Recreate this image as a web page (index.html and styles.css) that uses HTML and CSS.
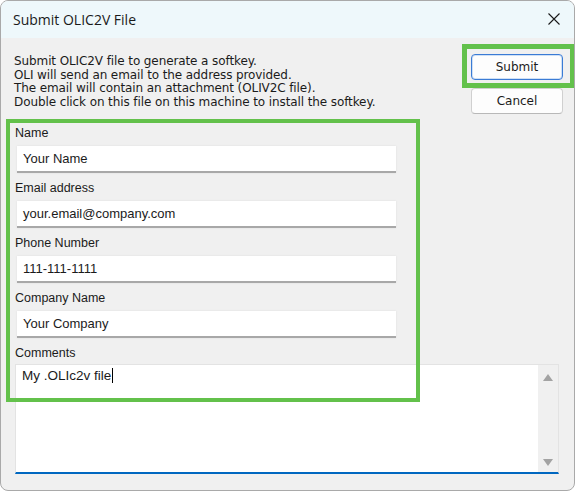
FILE: index.html
```html
<!DOCTYPE html>
<html>
<head>
  <title>Submit OLIC2V File</title>
  <link rel="stylesheet" href="styles.css">
</head>
<body>
  <div class="dialog">
    <div class="title-bar">
      <span class="title">Submit OLIC2V File</span>
      <span class="close">
        <svg width="12" height="12" viewBox="0 0 12 12">
          <path d="M0.5 0.5 L11.5 11.5 M11.5 0.5 L0.5 11.5" stroke="#1a1a1a" stroke-width="1.1" fill="none"/>
        </svg>
      </span>
    </div>

    <div class="dialog-body">
      <div class="top-row">
        <p class="intro">
          Submit OLIC2V file to generate a softkey.<br>
          OLI will send an email to the address provided.<br>
          The email will contain an attachment (OLIV2C file).<br>
          Double click on this file on this machine to install the softkey.
        </p>
        <div class="buttons">
          <button class="btn btn-default">Submit</button>
          <button class="btn">Cancel</button>
        </div>
      </div>

      <div class="fields">
        <label class="field-label">Name</label>
        <div class="text-input">Your Name</div>
        <label class="field-label">Email address</label>
        <div class="text-input">your.email@company.com</div>
        <label class="field-label">Phone Number</label>
        <div class="text-input">111-111-1111</div>
        <label class="field-label">Company Name</label>
        <div class="text-input">Your Company</div>
        <label class="field-label">Comments</label>
        <div class="text-area">
          <div class="text-area-content">My .OLIc2v file<span class="caret"></span></div>
          <div class="scrollbar">
            <span class="arrow arrow-up"></span>
            <span class="arrow arrow-down"></span>
          </div>
        </div>
      </div>
    </div>

    <!-- highlight boxes drawn over the dialog -->
    <div class="highlight highlight-fields"></div>
    <div class="highlight highlight-submit"></div>
  </div>
</body>
</html>
```

FILE: styles.css
```css
html, body {
  margin: 0;
  padding: 0;
  background-color: #ffffff;
}

.dialog {
  position: relative;
  width: 575px;
  height: 491px;
  box-sizing: border-box;
  border: 1px solid #a9a9a9;
  border-radius: 8px;
  background-color: #f0f0f0;
  overflow: hidden;
  font-family: "DejaVu Sans", sans-serif;
  color: #1b1b1b;
}

.title-bar {
  height: 37px;
  background-color: #eef8fb;
  display: flex;
  align-items: center;
  justify-content: space-between;
  padding: 0 14px 0 12px;
}

.title {
  font-family: "Open Sans", "Noto Sans", sans-serif;
  font-size: 14px;
  color: #1a1a1a;
  padding-bottom: 1px;
}

.close {
  display: flex;
  padding-bottom: 1px;
}

.dialog-body {
  padding: 17px 11px 0 13px;
}

.top-row {
  display: flex;
  justify-content: space-between;
}

.intro {
  margin: 0;
  font-family: "DejaVu Sans", sans-serif;
  font-size: 12px;
  line-height: 13.5px;
  letter-spacing: -0.1px;
}

.buttons {
  display: flex;
  flex-direction: column;
  gap: 8px;
  margin-top: -1px;
}

.btn {
  width: 92px;
  height: 26px;
  box-sizing: border-box;
  border: 1px solid #d0d0d0;
  border-bottom-color: #b8b8b8;
  border-radius: 4px;
  background-color: #fdfdfd;
  font-family: "DejaVu Sans", sans-serif;
  font-size: 12px;
  color: #1b1b1b;
  padding: 0;
}

.btn-default {
  border: 1px solid #3a7bd5;
  box-shadow: inset 0 0 0 1px #cfe0f5;
}

.fields {
  display: flex;
  flex-direction: column;
  margin-top: 12px;
}

.field-label {
  font-family: "Liberation Sans", Arial, sans-serif;
  font-size: 12.5px;
  line-height: 15px;
  height: 15px;
  padding-left: 1px;
  margin-bottom: 5px;
}

.text-input {
  width: 379px;
  height: 27px;
  box-sizing: border-box;
  margin-left: 3px;
  margin-bottom: 8px;
  background-color: #ffffff;
  border-bottom: 2px solid #a8a8a8;
  box-shadow: 0 0 2px rgba(0, 0, 0, 0.08);
  padding: 5px 6px 0;
  font-family: "Liberation Sans", Arial, sans-serif;
  font-size: 13px;
  line-height: 16px;
}

.text-area {
  width: 544px;
  height: 110px;
  box-sizing: border-box;
  margin-left: 1px;
  margin-top: -2px;
  background-color: #ffffff;
  border: 1px solid #e3e3e3;
  border-bottom: 2px solid #0067c0;
  display: flex;
}

.text-area-content {
  flex: 1;
  padding: 3px 6px;
  font-family: "Liberation Sans", Arial, sans-serif;
  font-size: 13.5px;
  line-height: 16px;
}

.caret {
  display: inline-block;
  width: 1px;
  height: 15px;
  background-color: #000000;
  vertical-align: -3px;
  margin-left: 1px;
}

.scrollbar {
  width: 20px;
  background-color: #f0f0f0;
  display: flex;
  flex-direction: column;
  justify-content: space-between;
  align-items: center;
  padding: 9px 0 6px;
}

.arrow {
  width: 0;
  height: 0;
  border-left: 5px solid transparent;
  border-right: 5px solid transparent;
}

.arrow-up {
  border-bottom: 7px solid #a3a3a3;
}

.arrow-down {
  border-top: 7px solid #a3a3a3;
}

.highlight {
  position: absolute;
  border: 4px solid #63c14b;
  box-sizing: border-box;
}

.highlight-fields {
  left: 5px;
  top: 118px;
  width: 414px;
  height: 283px;
}

.highlight-submit {
  left: 461px;
  top: 43px;
  width: 113px;
  height: 44px;
  border-width: 5px;
}
```
